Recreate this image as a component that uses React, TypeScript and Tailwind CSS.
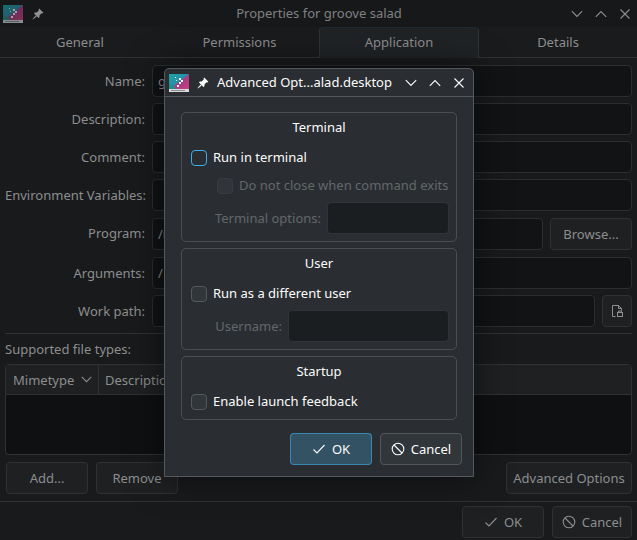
import React from "react";

const font = { fontFamily: '"Noto Sans", sans-serif' };

function AppIcon({ dim }: { dim?: boolean }) {
  return (
    <svg width="20" height="18" viewBox="0 0 20 18" className={dim ? "opacity-60" : ""}>
      <defs>
        <linearGradient id={dim ? "g1" : "g2"} x1="0" y1="0" x2="1" y2="1">
          <stop offset="0" stopColor="#16a5a5" />
          <stop offset="0.48" stopColor="#2a8fa8" />
          <stop offset="0.52" stopColor="#a83a86" />
          <stop offset="1" stopColor="#c9417a" />
        </linearGradient>
      </defs>
      <rect x="0" y="0" width="20" height="16" fill={`url(#${dim ? "g1" : "g2"})`} />
      <polygon points="0,16 9,16 0,9" fill="#1f8f87" />
      <rect x="0" y="15" width="20" height="3" fill="#d8dadb" />
      <rect x="2" y="16" width="14" height="1" fill="#8a8f92" />
      <rect x="10" y="4" width="2" height="2" fill="#fff" />
      <rect x="12" y="6" width="2" height="2" fill="#fff" />
      <rect x="10" y="8" width="2" height="2" fill="#fff" />
      <rect x="8" y="11" width="2" height="2" fill="#fff" />
      <rect x="7" y="6" width="1" height="1" fill="#fff" />
      <rect x="6" y="3" width="1" height="1" fill="#fff" />
    </svg>
  );
}

function Pin({ color }: { color: string }) {
  return (
    <svg width="12" height="12" viewBox="0 0 12 12" fill={color}>
      <path d="M7.2 0.6 11.4 4.8 10.3 5.5 9.6 5.2 7.4 7.4 7.5 9.2 6.5 10 2 5.5 2.8 4.5 4.6 4.6 6.8 2.4 6.5 1.7Z" />
      <path d="M3.6 7.4 4.6 8.4 1 11.4 0.6 11Z" />
    </svg>
  );
}

function ChevDown({ color, size = 12 }: { color: string; size?: number }) {
  return (
    <svg width={size} height={size} viewBox="0 0 12 12" fill="none" stroke={color} strokeWidth="1.1">
      <path d="M0.8 3.2 6 8.4 11.2 3.2" />
    </svg>
  );
}
function ChevUp({ color }: { color: string }) {
  return (
    <svg width="12" height="12" viewBox="0 0 12 12" fill="none" stroke={color} strokeWidth="1.1">
      <path d="M0.8 8.8 6 3.6 11.2 8.8" />
    </svg>
  );
}
function Close({ color }: { color: string }) {
  return (
    <svg width="12" height="12" viewBox="0 0 12 12" fill="none" stroke={color} strokeWidth="1.1">
      <path d="M1.5 1.5 10.5 10.5M10.5 1.5 1.5 10.5" />
    </svg>
  );
}
function Check({ color }: { color: string }) {
  return (
    <svg width="14" height="14" viewBox="0 0 14 14" fill="none" stroke={color} strokeWidth="1.1">
      <path d="M1.5 7.5 5 11 12.5 3" />
    </svg>
  );
}
function Ban({ color }: { color: string }) {
  return (
    <svg width="14" height="14" viewBox="0 0 14 14" fill="none" stroke={color} strokeWidth="1.1">
      <circle cx="7" cy="7" r="5.8" />
      <path d="M3 3 11 11" />
    </svg>
  );
}
function FileIcon() {
  return (
    <svg width="16" height="16" viewBox="0 0 16 16" fill="none" stroke="#8d8f90" strokeWidth="1">
      <path d="M6.5 13.5H3.5V2.5H9.5L12.5 5.5V7.5" />
      <path d="M9.5 2.5V5.5H12.5" />
      <rect x="8.5" y="9.5" width="5" height="4" />
      <path d="M9.5 9.5V8H12.5V9.5" />
    </svg>
  );
}

function BgInput({ children, className = "" }: { children?: React.ReactNode; className?: string }) {
  return (
    <div className={`h-8 flex-1 min-w-0 overflow-hidden whitespace-nowrap rounded-[4px] border border-[#2b2d2f] bg-[#111314] px-[5px] flex items-center text-[#8c8e8f] ${className}`}>
      {children && <span className="pt-[2px]">{children}</span>}
    </div>
  );
}

function BgButton({ children, icon, className = "" }: { children?: React.ReactNode; icon?: React.ReactNode; className?: string }) {
  return (
    <div className={`h-8 rounded-[4px] border border-[#2f3133] bg-[#1e2022] flex items-center justify-center gap-[6px] text-[#8c8e8f] ${className}`}>
      {icon}
      {children && <span className="pt-[2px]">{children}</span>}
    </div>
  );
}

function Row({ label, children, className = "", labelClass = "pt-[2px]" }: { label: string; children: React.ReactNode; className?: string; labelClass?: string }) {
  return (
    <div className={`flex items-center ${className}`}>
      <div className={`w-[140px] shrink-0 text-right text-[#8c8e8f] whitespace-nowrap ${labelClass}`}>{label}</div>
      <div className="flex flex-1 items-center ml-[7px]">{children}</div>
    </div>
  );
}

function Checkbox({ state = "normal" }: { state?: "normal" | "focus" | "disabled" }) {
  const cls =
    state === "focus"
      ? "border-[#3daee9] bg-[#2a2e32]"
      : state === "disabled"
      ? "border-[#383c40] bg-[#31353a]"
      : "border-[#55595d] bg-[#31363b]";
  return <div className={`w-4 h-4 rounded-[4px] border ${cls} shrink-0`} />;
}

function Group({ title, children, className = "" }: { title: string; children: React.ReactNode; className?: string }) {
  return (
    <div className={`rounded-[5px] border border-[#4a4e52] flex flex-col ${className}`}>
      <div className="text-center text-[#fcfcfc] h-[28px] leading-[28px]">{title}</div>
      {children}
    </div>
  );
}

export default function App() {
  return (
    <div className="relative w-[637px] h-[540px] overflow-hidden bg-[#191a1c] text-[13px]" style={font}>
      {/* Title bar */}
      <div className="h-[27px] bg-[#17181a] flex items-center pl-[3px] pr-[6px] text-[#7f8182]">
        <AppIcon dim />
        <div className="ml-[9px]"><Pin color="#909294" /></div>
        <div className="flex-1 text-center pl-[23px]">Properties for groove salad</div>
        <div className="flex items-center gap-[12px]">
          <ChevDown color="#8c8e8f" />
          <ChevUp color="#8c8e8f" />
          <Close color="#8c8e8f" />
        </div>
      </div>

      {/* Tabs */}
      <div className="h-[31px] flex border-b border-[#303234] text-[#8c8e8f] bg-[#1a1b1d]">
        <div className="w-[160px] flex items-center justify-center pt-px">General</div>
        <div className="w-[159px] flex items-center justify-center pt-px">Permissions</div>
        <div className="w-[160px] h-[31px] flex items-center justify-center bg-[#202326] border-t border-r border-l border-t-[#1f2a33] border-r-[#303234] border-l-[#303234] rounded-t-[4px]">Application</div>
        <div className="flex-1 flex items-center justify-center pt-px">Details</div>
      </div>

      {/* Form */}
      <div className="flex flex-col px-[5px] pt-[7px]">
        <div className="flex flex-col gap-[6px]">
          <Row label="Name:"><BgInput>groove salad</BgInput></Row>
          <Row label="Description:"><BgInput /></Row>
          <Row label="Comment:"><BgInput /></Row>
          <Row label="Environment Variables:"><BgInput /></Row>
        </div>
        <Row label="Program:" className="mt-[7px]" labelClass="">
          <BgInput>/usr/bin/groove</BgInput>
          <BgButton className="w-[82px] ml-[7px]">Browse...</BgButton>
        </Row>
        <Row label="Arguments:" className="mt-[7px]"><BgInput>/</BgInput></Row>
        <Row label="Work path:" className="mt-[6px]">
          <BgInput />
          <BgButton className="w-[30px] ml-[7px]" icon={<FileIcon />} />
        </Row>
        <div className="h-px bg-[#303234] mt-[6px]" />
        <div className="mt-[5px] h-[20px] leading-[20px] text-[#8c8e8f]">Supported file types:</div>
        <div className="mt-[5px] h-[91px] rounded-[4px] border border-[#2f3133] bg-[#0f1011] overflow-hidden text-[#8c8e8f]">
          <div className="h-[30px] flex items-center bg-[#1e2022] border-b border-[#2f3133]">
            <div className="w-[93px] h-full flex items-center justify-between pl-[7px] pr-[6px] border-r border-[#2f3133]">
              <span className="pt-[2px]">Mimetype</span>
              <ChevDown color="#8c8e8f" size={11} />
            </div>
            <div className="pl-[6px] pt-[2px]">Description</div>
          </div>
        </div>
        <div className="mt-[7px] flex items-center pl-px">
          <BgButton className="w-[82px]">Add...</BgButton>
          <BgButton className="w-[82px] ml-[8px]">Remove</BgButton>
          <div className="flex-1" />
          <BgButton className="w-[126px]">Advanced Options</BgButton>
        </div>
      </div>
      <div className="h-px bg-[#303234] mt-[7px]" />
      <div className="flex justify-end gap-[8px] pr-[5px] pt-[4px]">
        <BgButton className="w-[82px]" icon={<Check color="#8c8e8f" />}>OK</BgButton>
        <BgButton className="w-[80px]" icon={<Ban color="#8c8e8f" />}>Cancel</BgButton>
      </div>

      {/* Dialog window */}
      <div className="absolute left-[164px] top-[68px] w-[310px] h-[409px] rounded-t-[5px] border border-[#55595d] bg-[#2a2e32] shadow-[0_0_36px_rgba(0,0,0,0.55)] flex flex-col">
        <div className="h-[28px] flex items-center pl-[4px] pr-[8px] border-b border-[#55595d] text-[#fcfcfc]">
          <AppIcon />
          <div className="ml-[8px]"><Pin color="#fcfcfc" /></div>
          <div className="ml-[8px] flex-1 whitespace-nowrap">Advanced Opt...alad.desktop</div>
          <div className="flex items-center gap-[12px]">
            <ChevDown color="#fcfcfc" />
            <ChevUp color="#fcfcfc" />
            <Close color="#fcfcfc" />
          </div>
        </div>
        <div className="flex flex-col gap-[6px] px-[16px] pt-[15px]">
          <Group title="Terminal" className="h-[130px]">
            <div className="flex items-center gap-[6px] pl-[9px] mt-[7px] h-[20px] text-[#fcfcfc]">
              <Checkbox state="focus" />
              <span>Run in terminal</span>
            </div>
            <div className="flex items-center gap-[6px] pl-[35px] mt-[8px] h-[20px] text-[#63676a]">
              <Checkbox state="disabled" />
              <span className="whitespace-nowrap">Do not close when command exits</span>
            </div>
            <div className="flex items-center justify-end pr-[7px] mt-[6px] text-[#63676a]">
              <span className="mr-[6px] pt-[2px]">Terminal options:</span>
              <div className="w-[122px] h-8 rounded-[4px] border border-[#303438] bg-[#1b1e20]" />
            </div>
          </Group>
          <Group title="User" className="h-[102px]">
            <div className="flex items-center gap-[6px] pl-[9px] mt-[7px] h-[20px] text-[#fcfcfc]">
              <Checkbox />
              <span>Run as a different user</span>
            </div>
            <div className="flex items-center justify-end pr-[7px] mt-[6px] text-[#63676a]">
              <span className="mr-[6px] pt-[2px]">Username:</span>
              <div className="w-[161px] h-8 rounded-[4px] border border-[#303438] bg-[#1b1e20]" />
            </div>
          </Group>
          <Group title="Startup" className="h-[64px]">
            <div className="flex items-center gap-[6px] pl-[9px] mt-[7px] h-[20px] text-[#fcfcfc]">
              <Checkbox />
              <span>Enable launch feedback</span>
            </div>
          </Group>
        </div>
        <div className="flex justify-end gap-[8px] pr-[11px] mt-[13px] text-[#fcfcfc]">
          <div className="w-[82px] h-[32px] rounded-[4px] border border-[#3daee9]/60 bg-[#335264] flex items-center justify-center gap-[6px]">
            <Check color="#fcfcfc" /><span className="pt-[2px]">OK</span>
          </div>
          <div className="w-[82px] h-[32px] rounded-[4px] border border-[#53575b] bg-[#31363b] flex items-center justify-center gap-[6px]">
            <Ban color="#fcfcfc" /><span className="pt-[2px]">Cancel</span>
          </div>
        </div>
      </div>
    </div>
  );
}
